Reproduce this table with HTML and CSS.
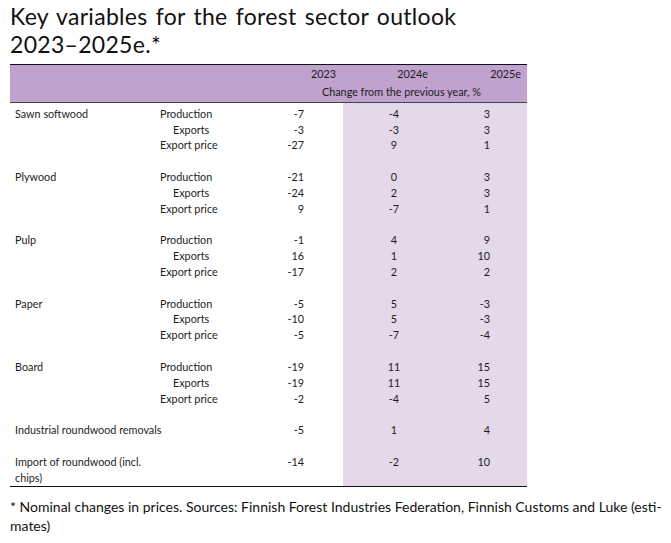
FILE: index.html
```html
<!DOCTYPE html>
<html lang="en">
<head>
<meta charset="utf-8">
<title>Key variables for the forest sector outlook</title>
<link rel="stylesheet" href="styles.css">
</head>
<body>
<div class="page">
  <h1 class="title">Key variables for the forest sector outlook<br>2023–2025e.*</h1>
  <div class="table">
    <div class="head">
      <div class="h-empty"></div>
      <div class="h-empty"></div>
      <div class="h-year h-2023">2023</div>
      <div class="h-year h-2024">2024e</div>
      <div class="h-year h-2025">2025e</div>
      <div class="h-empty"></div>
      <div class="h-empty"></div>
      <div class="h-change">Change from the previous year, %</div>
    </div>
    <div class="body">
      <div class="lab">Sawn softwood</div><div class="sub">Production</div><div class="v1">-7</div><div class="v2">-4</div><div class="v3">3</div>
      <div class="lab"></div><div class="sub ind">Exports</div><div class="v1">-3</div><div class="v2">-3</div><div class="v3">3</div>
      <div class="lab"></div><div class="sub">Export price</div><div class="v1">-27</div><div class="v2">9</div><div class="v3">1</div>
      <div class="blank"></div>

      <div class="lab">Plywood</div><div class="sub">Production</div><div class="v1">-21</div><div class="v2">0</div><div class="v3">3</div>
      <div class="lab"></div><div class="sub ind">Exports</div><div class="v1">-24</div><div class="v2">2</div><div class="v3">3</div>
      <div class="lab"></div><div class="sub">Export price</div><div class="v1">9</div><div class="v2">-7</div><div class="v3">1</div>
      <div class="blank"></div>

      <div class="lab">Pulp</div><div class="sub">Production</div><div class="v1">-1</div><div class="v2">4</div><div class="v3">9</div>
      <div class="lab"></div><div class="sub ind">Exports</div><div class="v1">16</div><div class="v2">1</div><div class="v3">10</div>
      <div class="lab"></div><div class="sub">Export price</div><div class="v1">-17</div><div class="v2">2</div><div class="v3">2</div>
      <div class="blank"></div>

      <div class="lab">Paper</div><div class="sub">Production</div><div class="v1">-5</div><div class="v2">5</div><div class="v3">-3</div>
      <div class="lab"></div><div class="sub ind">Exports</div><div class="v1">-10</div><div class="v2">5</div><div class="v3">-3</div>
      <div class="lab"></div><div class="sub">Export price</div><div class="v1">-5</div><div class="v2">-7</div><div class="v3">-4</div>
      <div class="blank"></div>

      <div class="lab">Board</div><div class="sub">Production</div><div class="v1">-19</div><div class="v2">11</div><div class="v3">15</div>
      <div class="lab"></div><div class="sub ind">Exports</div><div class="v1">-19</div><div class="v2">11</div><div class="v3">15</div>
      <div class="lab"></div><div class="sub">Export price</div><div class="v1">-2</div><div class="v2">-4</div><div class="v3">5</div>
      <div class="blank"></div>

      <div class="lab wide">Industrial roundwood removals</div><div class="v1">-5</div><div class="v2">1</div><div class="v3">4</div>
      <div class="blank"></div>

      <div class="lab">Import of roundwood (incl. chips)</div><div class="sub"></div><div class="v1">-14</div><div class="v2">-2</div><div class="v3">10</div>
    </div>
  </div>
  <p class="note">* Nominal changes in prices. Sources: Finnish Forest Industries Federation, Finnish Customs and Luke (esti-<br>mates)</p>
</div>
</body>
</html>
```

FILE: styles.css
```css
html, body {
  margin: 0;
  padding: 0;
  background: #ffffff;
}

body {
  font-family: Lato, "Open Sans", sans-serif;
  color: #1c1c1c;
}

.page {
  padding: 3px 0 0 10px;
  width: 661px;
}

.title {
  margin: 0;
  font-weight: 400;
  font-size: 23px;
  line-height: 27.6px;
  letter-spacing: 0.3px;
  word-spacing: 2px;
  color: #111;
}

.table {
  width: 517px;
  margin-top: 5.5px;
  font-size: 10.8px;
}

.head {
  display: grid;
  grid-template-columns: 145px 105px 83px 102px 82px;
  grid-template-rows: 18.5px 18.5px;
  background: #bfa2cd;
  border-top: 1.5px solid #111;
  border-bottom: 1.5px solid #4a4150;
  line-height: 18.5px;
}

.h-year {
  text-align: right;
}

.h-2023 { padding-right: 7px; }
.h-2024 { padding-right: 17px; }
.h-2025 { padding-right: 6px; }

.h-change {
  grid-column: 3 / span 3;
  padding-left: 62px;
  white-space: nowrap;
}

.body {
  display: grid;
  grid-template-columns: 145px 105px 83px 102px 82px;
  grid-auto-rows: minmax(15.83px, auto);
  line-height: 15.83px;
  padding-top: 3px;
  background: linear-gradient(to right, transparent 333px, #e4d9ea 333px);
  border-bottom: 1.5px solid #111;
}

.lab {
  padding-left: 5px;
}

.lab.wide {
  grid-column: 1 / span 2;
}

.sub {
  padding-left: 5px;
}

.sub.ind {
  padding-left: 18px;
}

.v1 {
  text-align: right;
  padding-right: 39px;
}

.v2 {
  text-align: center;
}

.v3 {
  text-align: right;
  padding-right: 37px;
}

.blank {
  grid-column: 1 / -1;
}

.note {
  margin: 10px 0 0;
  font-size: 14px;
  line-height: 19px;
  color: #111;
}
```
